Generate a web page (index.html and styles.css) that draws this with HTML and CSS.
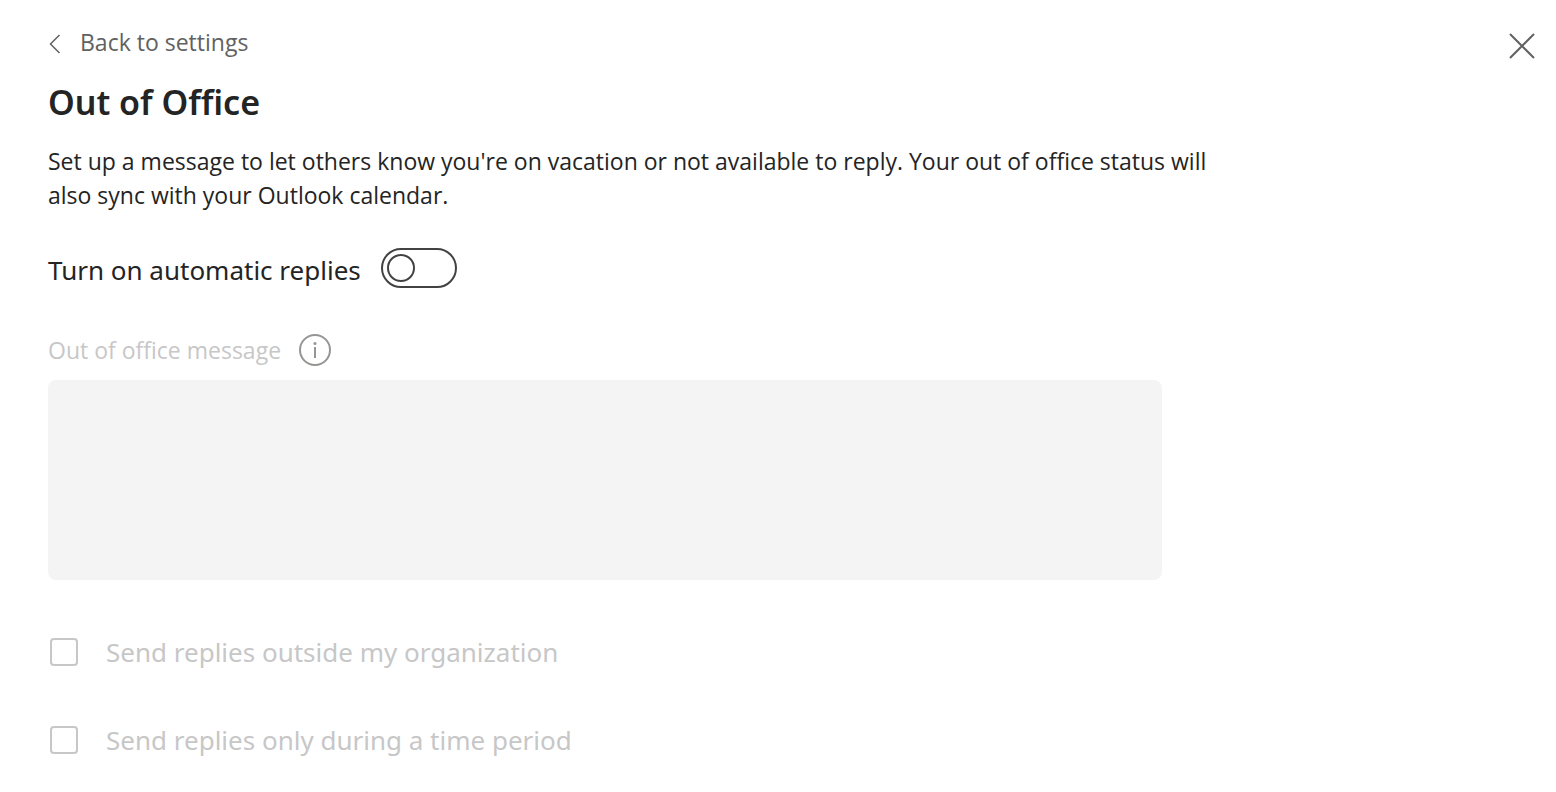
FILE: index.html
```html
<!DOCTYPE html>
<html lang="en">
<head>
<meta charset="utf-8">
<title>Out of Office</title>
<link rel="stylesheet" href="styles.css">
</head>
<body>
<main class="panel">
  <header class="top">
    <button class="back" type="button">
      <svg class="back-icon" viewBox="0 0 12 20" aria-hidden="true"><path d="M11.500 1 2.500 10l9 9"/></svg>
      <span>Back to settings</span>
    </button>
    <button class="close" type="button" aria-label="Close">
      <svg class="close-icon" viewBox="0 0 28 28" aria-hidden="true"><path d="M2 2 26 26M26 2 2 26"/></svg>
    </button>
  </header>
  <h1 class="title">Out of Office</h1>
  <p class="intro">Set up a message to let others know you're on vacation or not available to reply. Your out of office status will also sync with your Outlook calendar.</p>
  <div class="toggle-row">
    <label class="toggle-label" for="auto">Turn on automatic replies</label>
    <input class="toggle" id="auto" type="checkbox" role="switch">
  </div>
  <div class="message-head">
    <label for="message">Out of office message</label>
    <svg class="info" viewBox="0 0 32 32" aria-hidden="true"><circle cx="16" cy="16" r="15"/><path d="M16 13v11"/><circle class="dot" cx="16" cy="9.500" r="1.500"/></svg>
  </div>
  <textarea class="message" id="message" disabled></textarea>
  <div class="options">
    <label class="option"><input class="box" type="checkbox" disabled><span>Send replies outside my organization</span></label>
    <label class="option"><input class="box" type="checkbox" disabled><span>Send replies only during a time period</span></label>
  </div>
</main>
</body>
</html>
```
FILE: styles.css
```css
*, *::before { box-sizing: border-box; }
body { margin: 0; background: #fff; color: #242424; font-family: "Segoe UI", "Open Sans", sans-serif; }
.panel { padding: 24px 20px 24px 48px; }
.top { display: flex; justify-content: space-between; align-items: flex-start; }
button { border: 0; padding: 0; background: none; font: inherit; color: #616161; }
.back { display: flex; align-items: center; gap: 20px; font-size: 23px; line-height: 36px; }
.back-icon { width: 12px; height: 20px; margin-top: 4px; fill: none; stroke: #616161; stroke-width: 1.5; }
.close { display: flex; padding: 8px 0; }
.close-icon { width: 28px; height: 28px; fill: none; stroke: #616161; stroke-width: 2; }
.title { margin: 10px 0 0; font-family: "Segoe UI", "Noto Sans", sans-serif; font-size: 34px; line-height: 48px; font-weight: 600; }
.intro { max-width: 1160px; margin: 18px 0 0; font-size: 23px; line-height: 34px; }
.toggle-row { display: flex; align-items: center; gap: 20px; margin-top: 34px; }
.toggle-label { padding-top: 4px; font-family: "Segoe UI", "Noto Sans", sans-serif; font-size: 26px; line-height: 40px; }
.toggle { appearance: none; display: flex; align-items: center; width: 76px; height: 40px; margin: 0; padding: 0 4px; border: 2px solid #424242; border-radius: 20px; background: #fff; }
.toggle::before { content: ""; width: 28px; height: 28px; border: 2px solid #424242; border-radius: 50%; }
.message-head { display: flex; align-items: center; gap: 18px; margin-top: 42px; font-size: 23px; line-height: 36px; color: #c7c7c7; }
.info { width: 32px; height: 32px; fill: none; stroke: #979593; stroke-width: 2; }
.dot { fill: #979593; stroke: none; }
.message { display: block; width: 75%; max-width: 1114px; height: 200px; margin-top: 12px; border: 0; border-radius: 8px; background: #f4f4f4; resize: none; }
.options { display: grid; gap: 48px; margin-top: 52px; padding-left: 2px; }
.option { display: flex; align-items: center; gap: 28px; font-family: "Segoe UI", "Noto Sans", sans-serif; font-size: 26px; line-height: 40px; color: #c7c7c7; }
.box { appearance: none; width: 28px; height: 28px; margin: 0; border: 2px solid #c7c7c7; border-radius: 4px; }
```
